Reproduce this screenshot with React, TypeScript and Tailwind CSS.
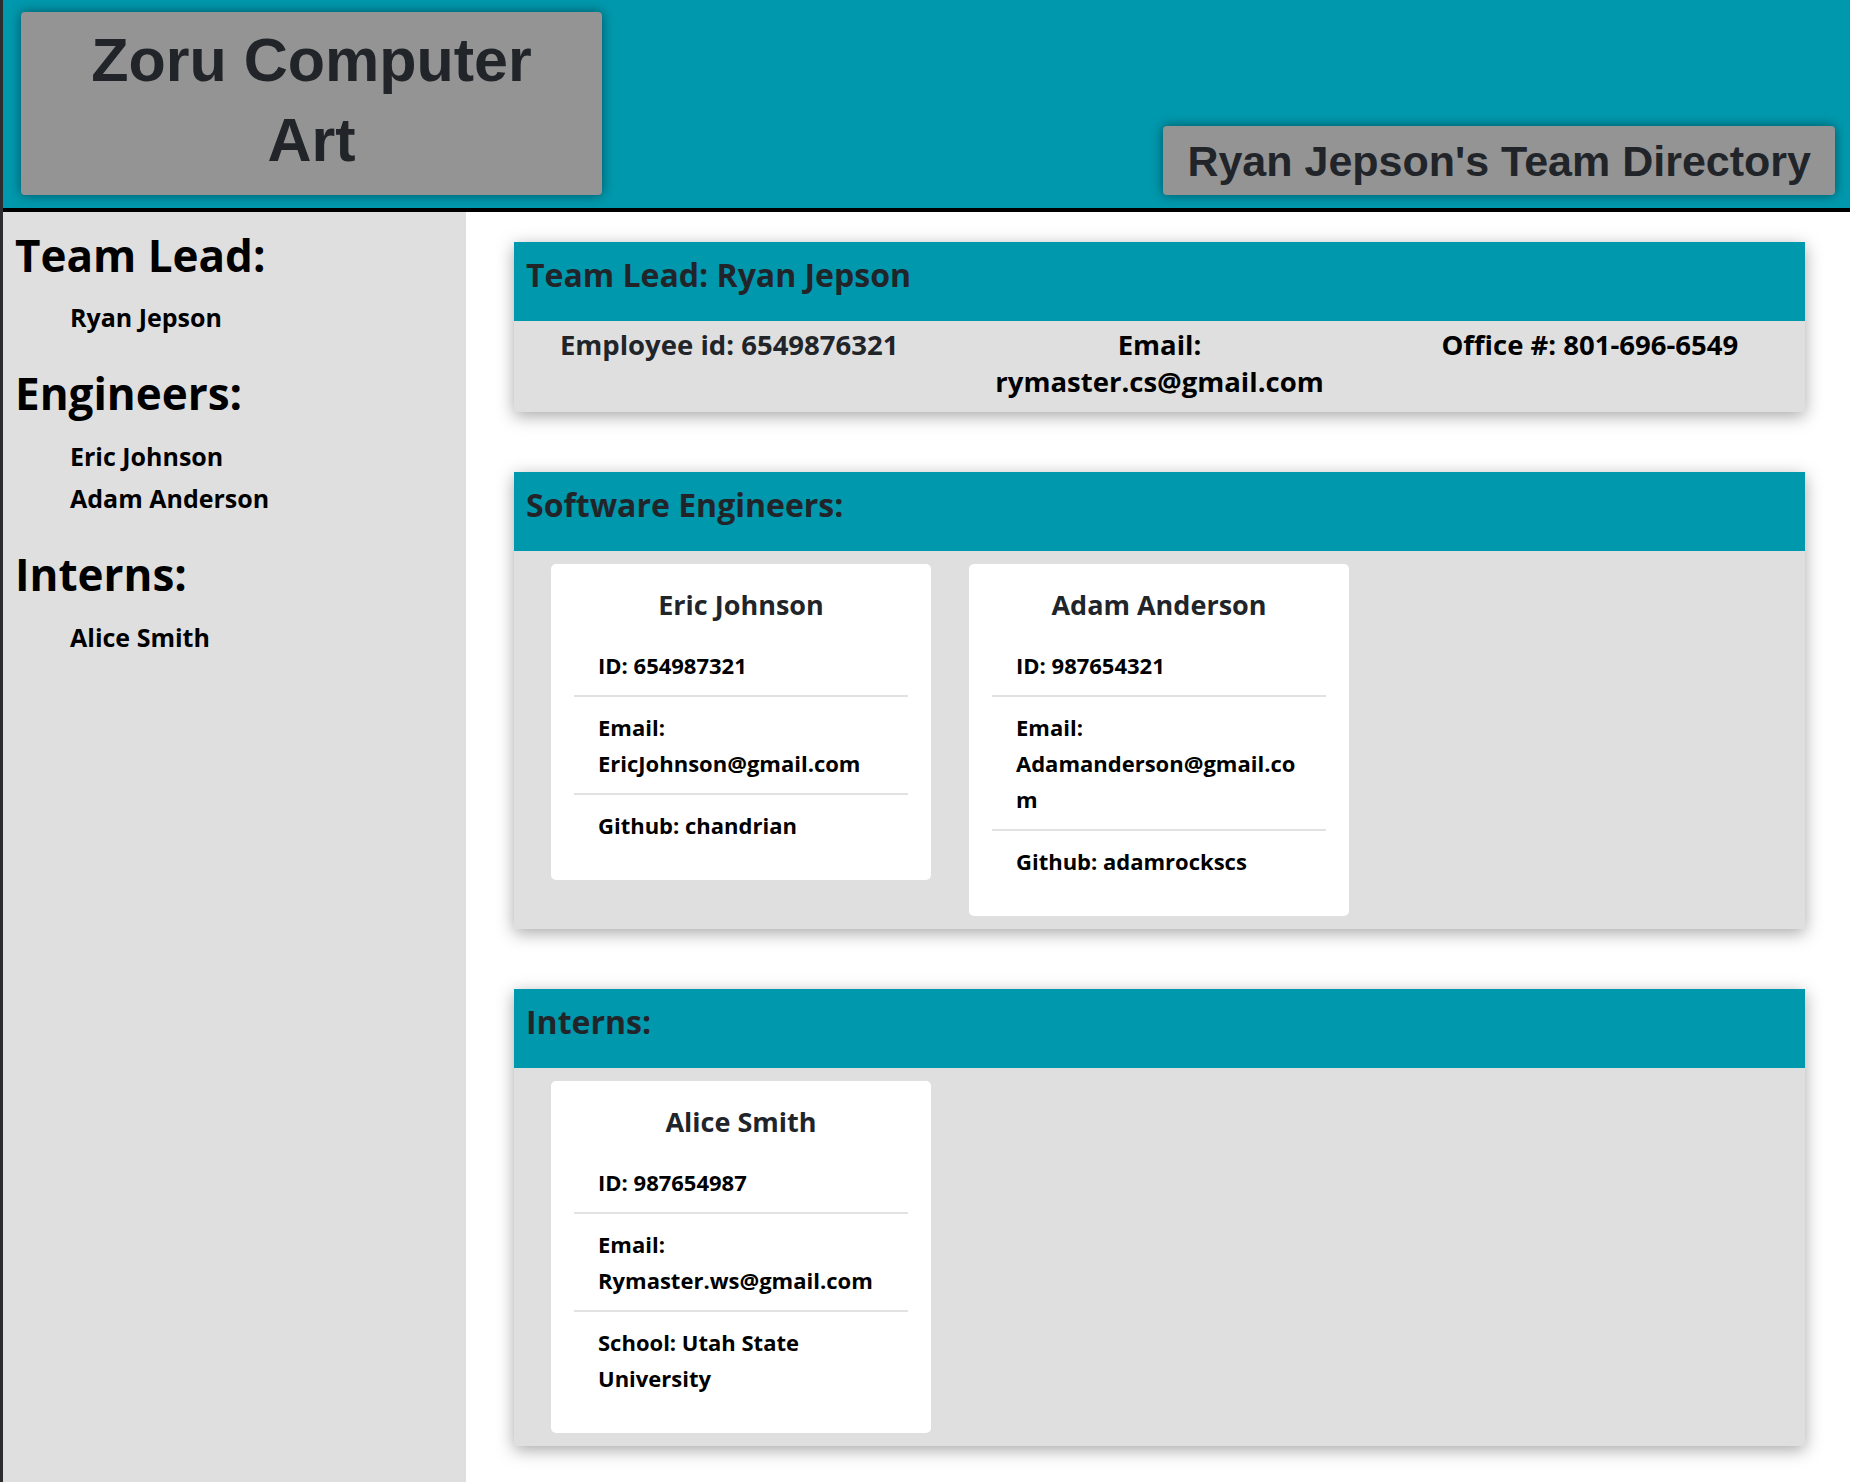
const teamLead = {
  name: "Ryan Jepson",
  id: "6549876321",
  email: "rymaster.cs@gmail.com",
  office: "801-696-6549",
};

const engineers = [
  { name: "Eric Johnson", id: "654987321", email: "EricJohnson@gmail.com", github: "chandrian" },
  { name: "Adam Anderson", id: "987654321", email: "Adamanderson@gmail.com", github: "adamrockscs" },
];

const interns = [
  { name: "Alice Smith", id: "987654987", email: "Rymaster.ws@gmail.com", school: "Utah State University" },
];

function SectionHeader({ title }: { title: string }) {
  return (
    <div className="h-[79px] bg-[#0098ad] px-3 pt-[13px]">
      <h2 className="text-[32px] leading-[40px] font-bold text-[#212529]">{title}</h2>
    </div>
  );
}

function PersonCard({ name, rows }: { name: string; rows: string[] }) {
  return (
    <div className="w-[380px] rounded-[5px] bg-white px-[23px] pt-[23px] pb-[25px]">
      <h3 className="mb-3 text-center text-[27px] leading-[36px] font-bold text-[#212529]">{name}</h3>
      <ul>
        {rows.map((row, i) => (
          <li
            key={i}
            className={
              "px-6 py-3 text-[22px] leading-[36px] font-bold text-black break-words " +
              (i < rows.length - 1 ? "border-b-2 border-[#e2e2e2]" : "")
            }
          >
            {row}
          </li>
        ))}
      </ul>
    </div>
  );
}

export default function App() {
  return (
    <div
      className="min-h-screen flex flex-col border-l-[3px] border-[#2b2d31] bg-white"
      style={{ fontFamily: "'Open Sans', sans-serif" }}
    >
      {/* header */}
      <header className="h-[212px] flex justify-between items-start border-b-4 border-black bg-[#0098ad] pl-[18px] pr-[15px] pt-3">
        <div className="w-[581px] h-[183px] rounded-[4px] bg-[#949494] pt-2 text-center shadow-[0_0_12px_rgba(0,0,0,0.45)]">
          <h1
            className="text-[61px] leading-[80px] font-bold text-[#212529]"
            style={{ fontFamily: "'Liberation Sans', Arial, sans-serif" }}
          >
            Zoru Computer
            <br />
            Art
          </h1>
        </div>
        <div className="mt-[114px] h-[69px] flex items-center rounded-[4px] bg-[#949494] px-[24px] shadow-[0_0_12px_rgba(0,0,0,0.45)]">
          <h2
            className="text-[43px] leading-[50px] font-bold text-[#212529]"
            style={{ fontFamily: "'Liberation Sans', Arial, sans-serif" }}
          >
            Ryan Jepson's Team Directory
          </h2>
        </div>
      </header>

      <div className="flex flex-1">
        {/* sidebar */}
        <aside className="w-[463px] bg-[#dfdfdf] pl-3 pt-4 text-black">
          <h2 className="text-[44px] leading-[54px] font-bold">Team Lead:</h2>
          <ul className="mt-[14px] pl-[55px]">
            <li className="text-[25px] leading-[42px] font-bold">{teamLead.name}</li>
          </ul>
          <h2 className="mt-[28px] text-[44px] leading-[54px] font-bold">Engineers:</h2>
          <ul className="mt-[15px] pl-[55px]">
            {engineers.map((e) => (
              <li key={e.id} className="text-[25px] leading-[42px] font-bold">
                {e.name}
              </li>
            ))}
          </ul>
          <h2 className="mt-[28px] text-[44px] leading-[54px] font-bold">Interns:</h2>
          <ul className="mt-[15px] pl-[55px]">
            {interns.map((e) => (
              <li key={e.id} className="text-[25px] leading-[42px] font-bold">
                {e.name}
              </li>
            ))}
          </ul>
        </aside>

        {/* main */}
        <main className="flex-1 pl-12 pr-[45px] pt-[30px] pb-9 flex flex-col gap-[60px]">
          <section className="bg-[#dfdfdf] shadow-[0_4px_16px_rgba(0,0,0,0.35)]">
            <SectionHeader title={"Team Lead: " + teamLead.name} />
            <div className="grid grid-cols-3 pt-[5px] pb-3 text-center text-[27.5px] leading-[37px] font-bold">
              <p className="px-6 text-[#212529]">Employee id: {teamLead.id}</p>
              <p className="px-6 text-black">Email: {teamLead.email}</p>
              <p className="px-6 text-black">Office #: {teamLead.office}</p>
            </div>
          </section>

          <section className="bg-[#dfdfdf] shadow-[0_4px_16px_rgba(0,0,0,0.35)]">
            <SectionHeader title="Software Engineers:" />
            <div className="flex items-start gap-[38px] pl-[37px] py-[13px]">
              {engineers.map((e) => (
                <PersonCard
                  key={e.id}
                  name={e.name}
                  rows={["ID: " + e.id, "Email: " + e.email, "Github: " + e.github]}
                />
              ))}
            </div>
          </section>

          <section className="bg-[#dfdfdf] shadow-[0_4px_16px_rgba(0,0,0,0.35)]">
            <SectionHeader title="Interns:" />
            <div className="flex items-start gap-[38px] pl-[37px] py-[13px]">
              {interns.map((e) => (
                <PersonCard
                  key={e.id}
                  name={e.name}
                  rows={["ID: " + e.id, "Email: " + e.email, "School: " + e.school]}
                />
              ))}
            </div>
          </section>
        </main>
      </div>
    </div>
  );
}
